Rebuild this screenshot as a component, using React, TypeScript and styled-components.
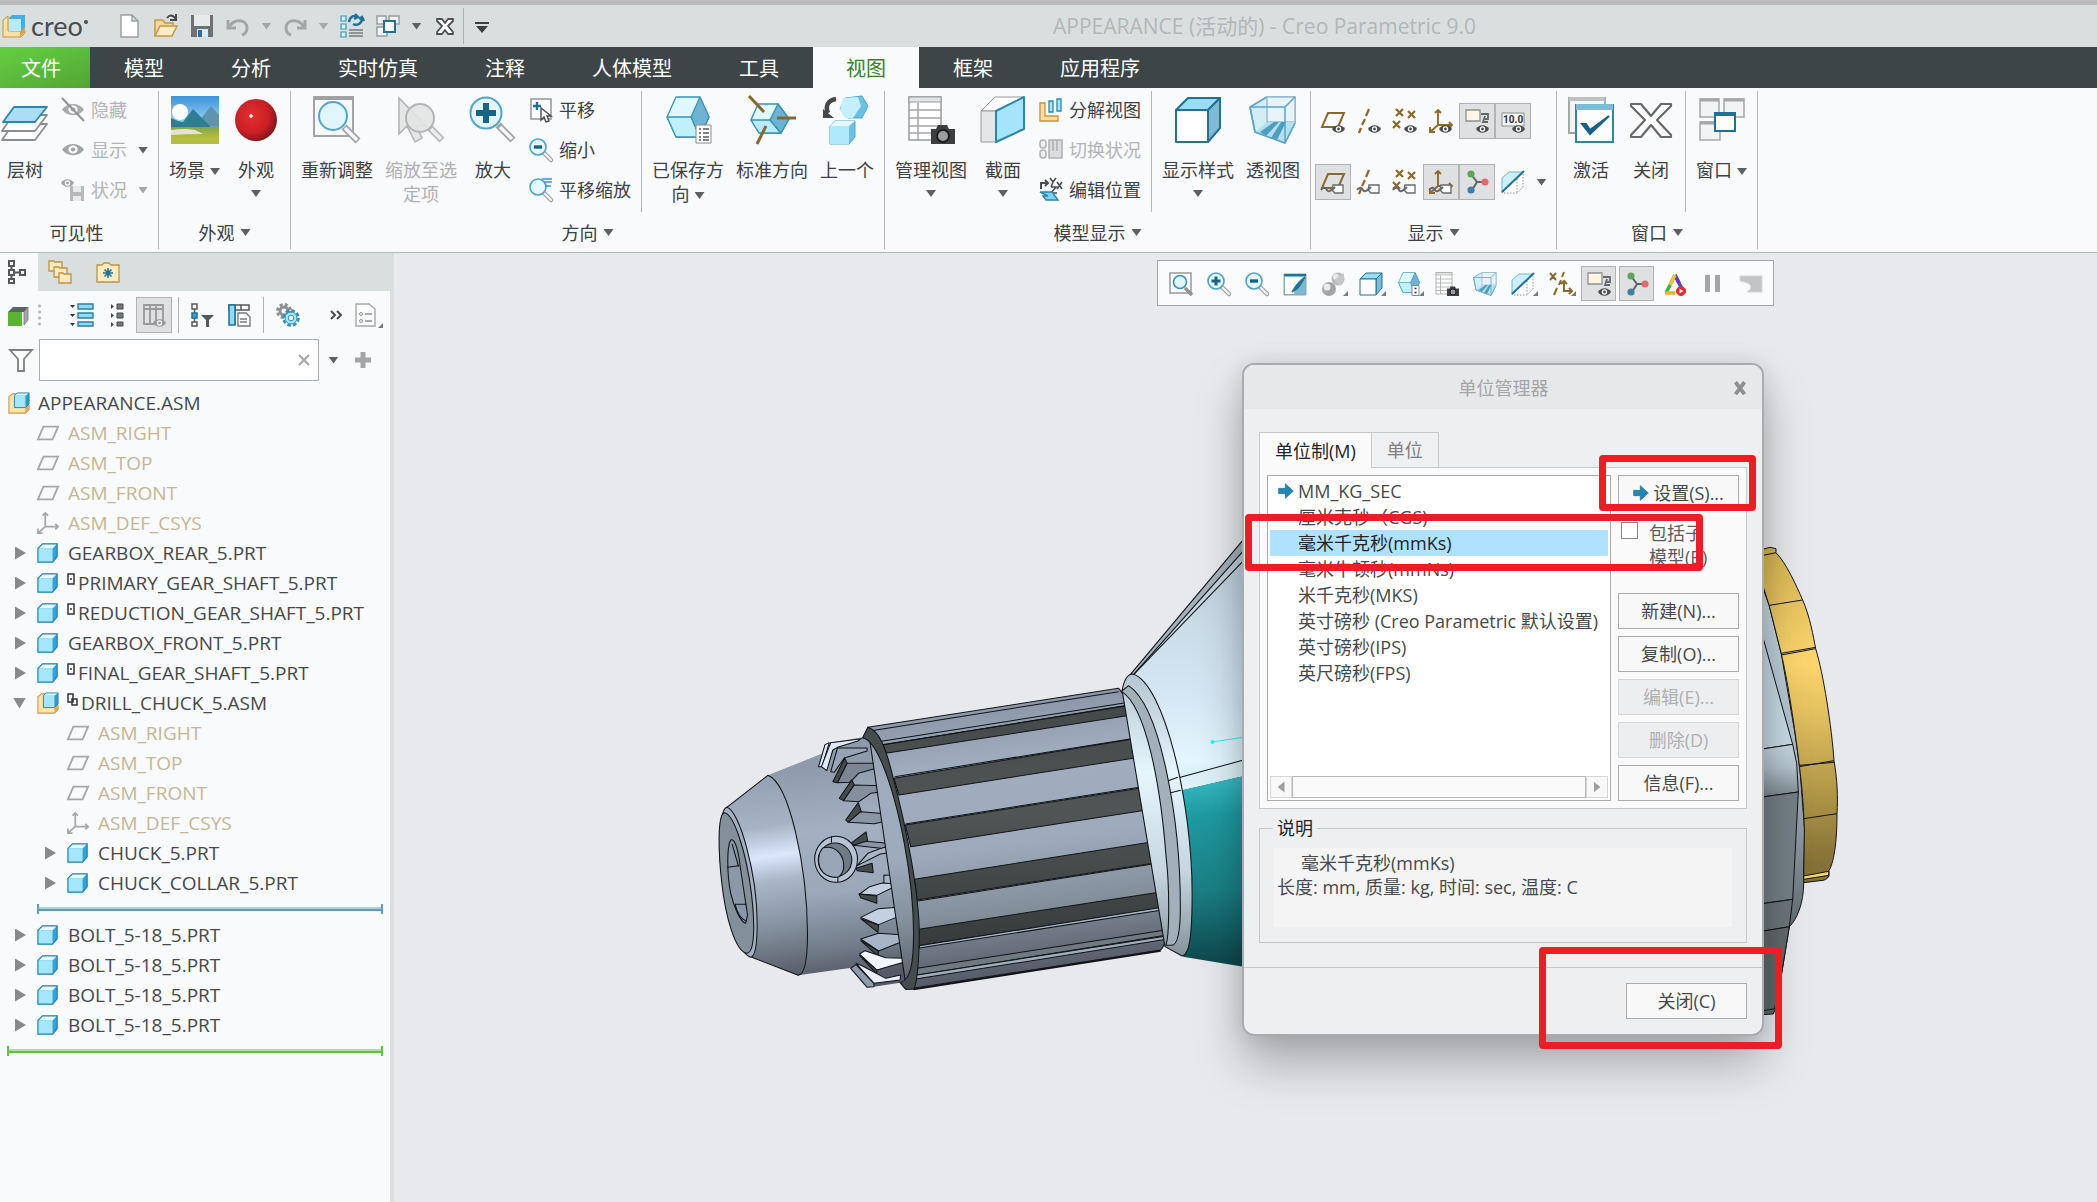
import React, { useState } from "react";
import styled, { createGlobalStyle, css } from "styled-components";

const GlobalStyle = createGlobalStyle`
  *, *::before, *::after { box-sizing: border-box; }
  html, body, #root { height: 100%; }
  body {
    margin: 0;
    overflow: hidden;
    background: #e8e9ed;
    color: #3e4143;
    font-family: "Open Sans", "Noto Sans CJK SC", sans-serif;
    font-size: 18px;
    line-height: 24px;
  }
  button, input { font: inherit; color: inherit; }
  button { border: 0; padding: 0; background: none; cursor: default; }
`;

/* ------------------------------------------------------------------ icons */

const Glyph = styled.svg<{ $size: number }>`
  display: block;
  flex: none;
  width: ${(p) => p.$size}px;
  height: ${(p) => p.$size}px;
  overflow: visible;
`;

const BLUE = "#1f7196";
const SKY = "#a5e6fb";
const BROWN = "#8a6a2c";

const Eye = ({ x = 0, y = 0, c = "#4a4d4f" }: { x?: number; y?: number; c?: string }) => (
  <g transform={`translate(${x} ${y})`}>
    <path d="M0 5C3 0 10 0 13 5 10 10 3 10 0 5Z" fill={c} />
    <circle cx="6.500" cy="5" r="2.700" fill="#fff" />
    <circle cx="6.500" cy="5" r="1.400" fill={c} />
  </g>
);

const Tag = () => (
  <g fill="#fff" stroke="#66696b" strokeWidth="1.300">
    <path d="M12 15h10v8h-8l-3-3z" />
    <path d="M0 20c3-4 5-2 6 0s3 2 8-3" fill="none" stroke="#66696b" strokeWidth="2" />
  </g>
);

const Molecule = () => (
  <g>
    <path d="M6 4l6 8-5 8M12 12h8" stroke="#5b6466" strokeWidth="2" fill="none" />
    <circle cx="6" cy="4" r="3.600" fill="#5fa558" />
    <circle cx="6" cy="20" r="3.600" fill="#3f7fa5" />
    <circle cx="20" cy="12" r="3.600" fill="#e46a68" />
  </g>
);

const Magnifier = ({ children }: { children?: React.ReactNode }) => (
  <g>
    <path d="M14 14l8 8" stroke="#9b9d9f" strokeWidth="4.500" strokeLinecap="round" />
    <path d="M15 15l7 7" stroke="#f1f2f3" strokeWidth="2.400" strokeLinecap="round" />
    <circle cx="9" cy="9" r="8" fill="#e6f7fe" stroke="#4aa3c8" strokeWidth="1.600" />
    {children}
  </g>
);

const BoxPart = () => (
  <g>
    <path d="M1 7l5-5h16v14l-5 6H1z" fill="#2ea3de" />
    <path d="M1 7l5-5h16l-5 5z" fill="#e6f9ff" />
    <path d="M1 7h16v15H1z" fill={SKY} />
    <path d="M1 7l5-5h16v14l-5 6H1z" fill="none" stroke="#2583ad" strokeWidth="1.300" />
  </g>
);

const BoxAssembly = () => (
  <g>
    <path d="M1 5l4-3h4v13h14v4l-4 4H1z" fill="#fde3ac" stroke="#c79a4c" strokeWidth="1.200" />
    <path d="M19 23l4-4v-6l-4 3z" fill="#dca957" />
    <path d="M7 4l3-3h13v12l-4 4H7z" fill="#2f9bcb" />
    <path d="M7 4l3-3h13l-4 3z" fill="#def6ff" />
    <path d="M7 4h12v13H7z" fill={SKY} />
    <path d="M7 4l3-3h13v12l-4 4H7z" fill="none" stroke="#2583ad" />
  </g>
);

const Plane = ({ c = "#a6a7a8" }: { c?: string }) => (
  <path d="M7 4h16l-6 14H1z" fill="none" stroke={c} strokeWidth="2" />
);

const Axes = ({ c = "#a6a7a8" }: { c?: string }) => (
  <g fill="none" stroke={c} strokeWidth="1.900">
    <path d="M9 16V1M6 4l3-3 3 3M9 16h14M20 13l3 3-3 3M9 16l-8 7M1 18v5h5" />
  </g>
);

const Crosses = ({ c = BROWN }: { c?: string }) => (
  <path d="M3 0l7 7M10 0L3 7M15 2l7 7M22 2l-7 7M0 12l7 7M7 12l-7 7" stroke={c} strokeWidth="2.200" fill="none" />
);

const HexCube = () => (
  <g stroke="#3a93b5" strokeWidth="1.300" strokeLinejoin="round">
    <path d="M12 1h24l9 20-9 20H12L3 21z" fill="#dff7ff" />
    <path d="M3 21h24l9 20H12z" fill="#bff0fc" />
    <path d="M27 21L36 1l9 20-9 20z" fill="#6eb2d4" />
  </g>
);

const CamTable = () => (
  <g>
    <path d="M2 1h32v43H2z" fill="#fff" stroke="#98999b" strokeWidth="1.500" />
    <path d="M2 1h32v5H2z" fill="#e3e4e5" stroke="#98999b" />
    <path d="M2 14h32M2 22h32M2 30h32M2 37h32M11 7v37" stroke="#a4a5a7" strokeWidth="1.500" />
    <path d="M24 33h5l2-4h9l2 4h6v15H24z" fill="#3c3e40" />
    <circle cx="36" cy="40" r="6" fill="#9b9da0" stroke="#1d1e20" strokeWidth="2" />
  </g>
);

const Wire = () => (
  <g stroke="#59a5c3" strokeWidth="1.500" strokeLinejoin="round">
    <path d="M1 11L18 1h28v26L36 47 6 36z" fill="#d3ecf6" />
    <path d="M18 1v25h28V1z" fill="#e6f3f8" stroke="#9bbccb" />
    <path d="M18 26L6 36l30 11 10-21z" fill="#b5dfee" stroke="none" />
    <path d="M11 36l14-10h5L17 40zM22 42l10-16h5L28 44z" fill="#4d9fc0" stroke="none" />
    <path d="M1 11h35L46 1M36 11v36M1 11l5 25 30 11 10-20" fill="none" />
  </g>
);

const SolidBox = () => (
  <g stroke={BLUE} strokeWidth="2" strokeLinejoin="round">
    <path d="M2 14L14 2h32L34 14z" fill="#9adcf3" />
    <path d="M34 14L46 2v30L34 46z" fill="#7fbcd4" />
    <path d="M2 14h32v32H2z" fill="#fff" />
  </g>
);

const SectionLine = () => (
  <g>
    <path d="M1 8l7-6h14v14l-6 7H1z" fill="#fff" />
    <path d="M1 8l7-6h14L1 23z" fill="#cdeefb" stroke="#6cb8d8" />
    <path d="M3 23h13l6-6V3M16 9v13" stroke="#8f9193" strokeDasharray="1.500 1.500" fill="none" />
    <path d="M1 22L23 1" stroke={BLUE} strokeWidth="2" />
  </g>
);

const NoteBox = () => (
  <g>
    <path d="M1 1h14v11H1z" fill="#fdf6e2" stroke="#8f9091" strokeWidth="1.300" />
    <path d="M16 5h7v6M23 10h-4M20 7l-2 6h5" stroke="#66696b" strokeWidth="1.800" fill="none" />
    <Eye x={11} y={15} />
  </g>
);

const art: Record<string, { box: number; node: React.ReactNode }> = {
  logo: { box: 24, node: (
    <g>
      <path d="M1 6l5-4v15h17v2l-4 4H1z" fill="#fde0a2" stroke="#c4953f" />
      <path d="M18 23l5-5V7l-5 4z" fill="#d9a347" />
      <path d="M7 4l3-3h13v12l-4 4H7z" fill="#45b0dd" />
      <path d="M7 5h12v12H7z" fill="#b4ebfc" />
    </g>
  ) },
  fresh: { box: 24, node: <path d="M3 1h11l6 6v16H3zM14 1v6h6" fill="#fff" stroke="#9a9c9e" strokeWidth="1.400" /> },
  open: { box: 24, node: (
    <g>
      <path d="M1 22V6h8l2 3h8v4" fill="#f6d799" stroke="#c79746" strokeWidth="1.500" />
      <path d="M1 22l5-10h17l-5 10z" fill="#fdecc4" stroke="#c79746" strokeWidth="1.500" />
      <path d="M13 4c3-4 6-3 9 1M22 0v6h-6" stroke="#45484a" strokeWidth="2" fill="none" />
    </g>
  ) },
  save: { box: 24, node: (
    <g>
      <path d="M1 1h22v22H1z" fill="#6f7274" />
      <path d="M4 1h16v11H4z" fill="#e8e9ea" />
      <path d="M7 15h11v8H7z" fill="#d9eaf4" />
      <path d="M8 16h4v7H8z" fill="#2f6d9c" />
    </g>
  ) },
  undo: { box: 24, node: <path d="M2 6v8h8M3 13C8 4 21 5 21 14c0 4-2 6-5 7" fill="none" stroke="#a2a6a7" strokeWidth="3" /> },
  redo: { box: 24, node: <path d="M22 6v8h-8M21 13C16 4 3 5 3 14c0 4 2 6 5 7" fill="none" stroke="#a2a6a7" strokeWidth="3" /> },
  regen: { box: 24, node: (
    <g>
      <path d="M1 2h5v5H1zM1 10h5v5H1zM1 18h5v5H1z" fill="#d8f3fd" stroke="#3a93b5" strokeWidth="1.200" />
      <path d="M9 16h14M9 19h14M9 22h14" stroke="#77797b" strokeWidth="1.500" />
      <path d="M9 8c1-6 5-7 8-5M14 5l4-2-3-3M22 4c0 6-5 8-9 6M19 5l3-2 2 4" stroke={BLUE} strokeWidth="2.400" fill="none" />
    </g>
  ) },
  windows: { box: 24, node: (
    <g fill="#f4f5f6" stroke="#9a9c9e" strokeWidth="1.500">
      <path d="M1 2h9v8H1zM13 2h10v8H13zM1 13h10v9H1z" />
      <path d="M8 7h11v11H8z" fill="#fff" stroke={BLUE} strokeWidth="2" />
    </g>
  ) },
  xsmall: { box: 24, node: (
    <path d="M4 5h5l3 4 3-4h5v2l-5 5 5 6v2h-5l-3-4-3 4H4v-2l5-6-5-5z" fill="#fff" stroke="#4d5052" strokeWidth="1.800" strokeLinejoin="round" />
  ) },
  more: { box: 24, node: <path d="M5 8h14v2H5zM6 12h12l-6 7z" fill="#3c4042" /> },

  layers: { box: 48, node: (
    <g stroke="#8b8d8f" strokeWidth="1.800" strokeLinejoin="round">
      <path d="M12 28h34L34 44H1z" fill="#fff" />
      <path d="M12 19h34L34 35H1z" fill="#fff" />
      <path d="M13 11h33L34 26H2z" fill="#a9def6" stroke="#2b86aa" />
    </g>
  ) },
  scene: { box: 48, node: (
    <g>
      <defs>
        <linearGradient id="sky" x1="0" y1="0" x2="0" y2="1">
          <stop offset="0" stopColor="#3b93d9" />
          <stop offset=".6" stopColor="#a5d9f5" />
        </linearGradient>
        <linearGradient id="field" x1="0" y1="0" x2="0" y2="1">
          <stop offset="0" stopColor="#7fa548" />
          <stop offset=".6" stopColor="#b3bd3f" />
        </linearGradient>
      </defs>
      <path d="M0 0h48v48H0z" fill="url(#sky)" />
      <circle cx="9" cy="16" r="8" fill="#fbfdfe" />
      <path d="M24 30l16-20 8 9v12z" fill="#5f94ae" />
      <path d="M0 22l7 3 5 1 10-13 9 9 9 9H0z" fill="#2f7c95" />
      <path d="M0 31h48v17H0z" fill="url(#field)" />
      <path d="M0 34q14-2 24 0l8 4q-16 0-32 1z" fill="#e6e2cf" />
    </g>
  ) },
  sphere: { box: 48, node: (
    <g>
      <defs>
        <radialGradient id="redball" cx=".4" cy=".4" r=".62">
          <stop offset="0" stopColor="#e23030" />
          <stop offset=".65" stopColor="#cb2026" />
          <stop offset="1" stopColor="#84161c" />
        </radialGradient>
      </defs>
      <circle cx="24" cy="24" r="21" fill="url(#redball)" />
      <circle cx="19" cy="20" r="1.800" fill="#fff" />
    </g>
  ) },
  refit: { box: 48, node: (
    <g>
      <path d="M1 1h39v39H1z" fill="#f7f8f9" stroke="#a2a3a5" strokeWidth="2" />
      <path d="M1 1h39v3H1z" fill="#9fa0a2" />
      <path d="M31 31l14 14" stroke="#a2a3a5" strokeWidth="7" />
      <path d="M32 32l12 12" stroke="#f4f5f6" strokeWidth="3.500" />
      <circle cx="20" cy="20" r="14" fill="#e0f5fd" stroke="#4fa6ca" strokeWidth="2" />
    </g>
  ) },
  zoomsel: { box: 48, node: (
    <g>
      <path d="M2 2v36l8-8 8 16 7-4-6-12h10z" fill="#e5e6e7" stroke="#b4b5b6" strokeWidth="1.600" />
      <path d="M33 32l12 12" stroke="#b9babb" strokeWidth="7" />
      <path d="M34 33l10 10" stroke="#eceded" strokeWidth="3.500" />
      <circle cx="23" cy="22" r="14" fill="#e2e4e4" fillOpacity=".9" stroke="#b2b4b4" strokeWidth="2" />
    </g>
  ) },
  zoomin: { box: 48, node: (
    <g>
      <path d="M29 29l15 15" stroke="#a2a3a5" strokeWidth="7" />
      <path d="M31 31l12 12" stroke="#f4f5f6" strokeWidth="3.500" />
      <circle cx="17" cy="17" r="15.500" fill="#e4f6fd" stroke="#4fa6ca" strokeWidth="2" />
      <path d="M17 7v20M7 17h20" stroke="#176489" strokeWidth="6" />
    </g>
  ) },
  savedview: { box: 48, node: (
    <g>
      <HexCube />
      <path d="M32 29h15v18H32z" fill="#fff" stroke="#87898b" />
      <path d="M35 33h2M39 33h6M35 37h2M39 37h6M35 41h2M39 41h6M35 44h2M39 44h6" stroke="#55585a" strokeWidth="1.500" />
    </g>
  ) },
  stdview: { box: 48, node: (
    <g stroke="#3a93b5" strokeWidth="1.400" strokeLinejoin="round">
      <path d="M10 8h20l11 15-8 14H11L3 24z" fill="#e2f8ff" />
      <path d="M3 24h19l11 13H11z" fill="#b9ecfa" />
      <path d="M30 8l11 15-8 14-11-13z" fill="#6eb2d4" />
      <path d="M1 0l15 16M29 22h19M18 30L9 48" stroke="#86692a" strokeWidth="3" />
    </g>
  ) },
  previous: { box: 48, node: (
    <g>
      <path d="M13 3C5 4 2 10 5 17" fill="none" stroke="#45484a" strokeWidth="4.500" />
      <path d="M0 13v9h11z" fill="#45484a" />
      <path d="M22 2l17-2 6 10-6 12H25l-8-9z" fill="#6cc0e2" stroke="#4fa9cb" />
      <path d="M20 2l15-1 3 9-8 12H22l-5-8z" fill="#c5effc" />
      <path d="M7 30l5-5h20v16l-6 7H7z" fill="#6cc0e2" stroke="#4fa9cb" />
      <path d="M7 30h19v18H7z" fill="#aeeafb" />
      <path d="M7 30l5-5h20l-6 5z" fill="#e6f9ff" />
    </g>
  ) },
  manage: { box: 48, node: <CamTable /> },
  section: { box: 48, node: (
    <g strokeLinejoin="round">
      <path d="M2 15L16 1h29L17 15z" fill="#fff" stroke="#97999b" />
      <path d="M2 15h15v31H2z" fill="#e5e6e7" stroke="#97999b" />
      <path d="M17 15L45 1v32L17 46z" fill="#a5e4fa" stroke="#2b86aa" strokeWidth="2" />
    </g>
  ) },
  dispstyle: { box: 48, node: <SolidBox /> },
  perspective: { box: 48, node: <Wire /> },
  activate: { box: 48, node: (
    <g>
      <path d="M2 2h36v35H2z" fill="#f3f4f5" stroke="#9d9fa1" strokeWidth="1.800" />
      <path d="M2 1h36v4H2z" fill="#bfc0c2" />
      <path d="M9 9h37v37H9z" fill="#fcfdfd" stroke="#2b86aa" strokeWidth="2" />
      <path d="M9 8h37v6H9z" fill="#7dbad3" />
      <path d="M15 28l8 10 19-18-19 14-4-6z" fill="#186285" stroke="#186285" strokeWidth="2" />
    </g>
  ) },
  close: { box: 48, node: (
    <path d="M4 8h10l10 12L34 8h10v2L30 24l14 15v2H34L24 29 14 41H4v-2l14-15L4 10z" fill="#fff" stroke="#67696a" strokeWidth="2.200" strokeLinejoin="round" />
  ) },
  window: { box: 48, node: (
    <g fill="#f2f3f4" stroke="#a4a6a8" strokeWidth="1.500">
      <path d="M2 3h19v18H2zM26 3h20v18H26zM2 26h20v18H2z" />
      <path d="M2 4h19M26 4h20M2 27h20" strokeWidth="3" />
      <path d="M17 17h20v18H17z" fill="#fff" stroke={BLUE} strokeWidth="2" />
      <path d="M17 18h20" stroke={BLUE} strokeWidth="4" />
    </g>
  ) },

  hide: { box: 24, node: (
    <g><g transform="translate(1 4) scale(1.700 1.500)"><Eye c="#a9abac" /></g><path d="M1 0l22 23" stroke="#8f9192" strokeWidth="2" /></g>
  ) },
  show: { box: 24, node: <g transform="translate(1 4) scale(1.700 1.500)"><Eye c="#a2a4a5" /></g> },
  status: { box: 24, node: (
    <g>
      <Eye x={0} y={0} c="#a2a4a5" />
      <path d="M9 8h14v15H9z" fill="#b6b8b9" />
      <path d="M12 8h8v6h-8zM12 18h8v5h-8z" fill="#e9eaea" />
    </g>
  ) },
  pan: { box: 24, node: (
    <g>
      <path d="M2 1h20v20H2z" fill="#fff" stroke="#939597" strokeWidth="1.500" />
      <path d="M8 4v8M4 8h8" stroke={BLUE} strokeWidth="2.400" />
      <path d="M12 10v12l3-3 2 5 3-1-2-5h4z" fill="#fff" stroke="#4a4c4e" strokeWidth="1.400" />
    </g>
  ) },
  zoomout: { box: 24, node: <Magnifier><path d="M5 9h8" stroke="#176489" strokeWidth="3.400" /></Magnifier> },
  zoominS: { box: 24, node: <Magnifier><path d="M4.500 9h9M9 4.500v9" stroke="#176489" strokeWidth="3" /></Magnifier> },
  panzoom: { box: 24, node: <g><Magnifier /><path d="M13 1h10M15 4h8M16 8h6" stroke="#2e9ccd" strokeWidth="1.600" /></g> },
  explode: { box: 24, node: (
    <g>
      <path d="M1 5h5v13h13v5H1z" fill="#fbdd9d" stroke="#c4953f" strokeWidth="1.300" />
      <path d="M10 3h4v11h-4zM18 1h4v12h-4z" fill={SKY} stroke="#2b86aa" strokeWidth="1.300" />
    </g>
  ) },
  toggle: { box: 24, node: (
    <g fill="#eff0f0" stroke="#b0b2b3" strokeWidth="1.600">
      <rect x="1" y="2" width="6" height="8" rx="3" />
      <rect x="1" y="12" width="6" height="8" rx="3" />
      <path d="M10 2h13v18H10zM14 2v11M18 2v11" fill="#dcddde" />
    </g>
  ) },
  editpos: { box: 24, node: (
    <g fill="none">
      <path d="M2 11V5h6M6 2l3 3-3 3" stroke="#4a4d4f" strokeWidth="2" />
      <path d="M11 0l3 4 3-4M14 4l-2 5M18 4l5 7M23 4l-5 7M12 9h5l-5 6h6" stroke="#4a4d4f" strokeWidth="1.600" />
      <path d="M1 14h12l6 8H7l-3-4h5z" fill="#7fd3f2" stroke="#2b86aa" strokeWidth="1.400" />
    </g>
  ) },

  planeEye: { box: 24, node: <g><Plane c={BROWN} /><Eye x={11} y={15} /></g> },
  axisEye: { box: 24, node: <g><path d="M12 0L9 7M8 10l-3 6M4 19l-2 5" stroke={BROWN} strokeWidth="2.200" /><Eye x={11} y={15} /></g> },
  pointEye: { box: 24, node: <g><Crosses /><Eye x={11} y={15} /></g> },
  csysEye: { box: 24, node: <g><Axes c={BROWN} /><Eye x={10} y={15} /></g> },
  note: { box: 24, node: <NoteBox /> },
  dim: { box: 24, node: (
    <g>
      <path d="M1 4h22v13H1z" fill="#f6f7f7" stroke="#8a8c8e" />
      <text x="2" y="14" fontSize="10" fontWeight="700" fill="#2f3133" fontFamily="Roboto, sans-serif">10.0</text>
      <Eye x={11} y={15} />
    </g>
  ) },
  planeTag: { box: 24, node: <g><Plane c={BROWN} /><Tag /></g> },
  axisTag: { box: 24, node: <g><path d="M12 0L9 7M8 10l-3 6M4 19l-2 5" stroke={BROWN} strokeWidth="2.200" /><Tag /></g> },
  pointTag: { box: 24, node: <g><Crosses /><Tag /></g> },
  csysTag: { box: 24, node: <g><Axes c={BROWN} /><Tag /></g> },
  molecule: { box: 24, node: <Molecule /> },
  sectionLine: { box: 24, node: <SectionLine /> },

  gRefit: { box: 24, node: (
    <g>
      <path d="M1 1h21v20H1z" fill="#fff" stroke="#98999b" strokeWidth="1.500" />
      <path d="M16 16l7 7" stroke="#8f9193" strokeWidth="3.500" />
      <circle cx="11" cy="10" r="6.500" fill="#dff4fd" stroke="#3a93b5" strokeWidth="1.600" />
    </g>
  ) },
  repaint: { box: 24, node: (
    <g>
      <path d="M1 2h22v21H1z" fill="#7db8d0" stroke="#8fa3ac" />
      <path d="M1 2h22v2H1z" fill={BLUE} />
      <path d="M2 5h20C14 8 12 14 11 22H2z" fill="#fff" />
      <path d="M9 20l4-6 9-9-7 11z" fill={BLUE} stroke={BLUE} strokeWidth="1.500" />
    </g>
  ) },
  render: { box: 24, node: (
    <g>
      <circle cx="17" cy="7" r="6.500" fill="#b9babb" />
      <circle cx="15" cy="5" r="3" fill="#e9e9ea" />
      <path d="M13 8l7 6 3-8v-5" fill="#c6c7c8" />
      <circle cx="8" cy="17" r="7" fill="#a3a4a6" />
      <circle cx="6" cy="15" r="3.500" fill="#ebebec" />
    </g>
  ) },
  gSolid: { box: 48, node: <SolidBox /> },
  gHex: { box: 48, node: <g><HexCube /><path d="M30 27h14v20H30z" fill="#fff" stroke="#87898b" strokeWidth="2" /><path d="M35 33h4M35 41h4" stroke="#333" strokeWidth="3" /></g> },
  gManage: { box: 48, node: <CamTable /> },
  gWire: { box: 48, node: <Wire /> },
  datums: { box: 24, node: (
    <g stroke={BROWN} fill="none" strokeWidth="2">
      <path d="M1 1l6 7M7 1L1 8M15 0l-2 5M12 8l-2 5M8 16l-3 7M15 9v10h8M12 12l3-3 3 3M20 16l3 3-3 3" />
    </g>
  ) },
  prism: { box: 24, node: (
    <g fill="none" strokeWidth="3.500" strokeLinejoin="round">
      <path d="M3 21L12 3" stroke="#38b54a" />
      <path d="M12 3l9 18" stroke="#2d55c8" />
      <path d="M12 3l4 8" stroke="#7a2bbd" />
      <path d="M2 21h10" stroke="#e8b32a" />
      <path d="M7 13l5-10" stroke="#e7c72f" />
      <circle cx="18" cy="19" r="4.500" fill="#e6252c" stroke="#e6252c" strokeWidth="1" />
      <path d="M16.500 16.500v5l4-2.500z" fill="#fff" />
    </g>
  ) },
  pause: { box: 24, node: <path d="M4 3h5v17H4zM14 3h5v17h-5z" fill="#a4a5a7" /> },
  stop: { box: 24, node: <path d="M1 4h22v16H8c6-4 6-9-7-11z" fill="#c3c4c6" stroke="#d6d7d8" /> },

  tree: { box: 24, node: (
    <g fill="none" stroke="#55585a" strokeWidth="2">
      <path d="M2 1h5v5H2zM2 10h5v5H2zM2 19h5v4H2zM13 10h5v5h-5zM4.500 6v4M4.500 15v4M7 12.500h6" />
    </g>
  ) },
  folders: { box: 24, node: (
    <g fill="#fdeabf" stroke="#bf9347" strokeWidth="1.300">
      <path d="M1 1h5l1 1h7v9H1z" /><path d="M6 7h5l1 1h7v9H6z" /><path d="M11 13h4l1 1h7v9H11z" />
    </g>
  ) },
  favs: { box: 24, node: (
    <g>
      <path d="M1 5h5l2-2h5l2 2h8v17H1z" fill="#fdeabf" stroke="#bf9347" strokeWidth="1.300" />
      <path d="M12 8v10M7 13h10M8.500 9.500l7 7M15.500 9.500l-7 7" stroke={BLUE} strokeWidth="1.600" />
    </g>
  ) },
  greencube: { box: 24, node: (
    <g>
      <path d="M2 9l5-5h15l-4 5z" fill="#5f6264" />
      <path d="M18 9l4-5v13l-4 5z" fill="#a5a7a8" stroke="#77797b" strokeWidth=".8" />
      <path d="M2 9h14v14H2z" fill="#59b432" />
    </g>
  ) },
  expand: { box: 24, node: (
    <g>
      <path d="M0 2h5L2.500 5zM0 11h5l-2.500 3zM0 20h5l-2.500 3z" fill="#333" />
      <path d="M8 1h15v5H8zM8 10h15v5H8zM8 19h15v4H8z" fill="#8fdcf6" stroke="#2b7fa3" strokeWidth="1.400" />
    </g>
  ) },
  collapse: { box: 24, node: (
    <g fill="#45484a">
      <path d="M5 1v5l3-2.500zM5 10v5l3-2.500zM5 19v5l3-2.500z" />
      <path d="M11 1h6v5h-6zM11 10h6v5h-6zM11 19h6v4h-6z" fill="#77797b" stroke="#45484a" />
    </g>
  ) },
  cols: { box: 24, node: (
    <g>
      <path d="M2 2h19v19H2zM2 6h19M8 2v19M14 2v19" fill="none" stroke="#98999b" strokeWidth="1.800" />
      <Eye x={11} y={15} c="#98999b" />
    </g>
  ) },
  treefilter: { box: 24, node: (
    <g>
      <path d="M1 1h5v5H1zM1 19h5v4H1zM3.500 6v13" fill="#fff" stroke="#55585a" strokeWidth="1.500" />
      <path d="M1 10h5v5H1z" fill="#3fa4cf" stroke={BLUE} strokeWidth="1.500" />
      <path d="M10 12h13l-5 5v7h-3v-7z" fill="#55585a" />
    </g>
  ) },
  treecols: { box: 24, node: (
    <g>
      <path d="M2 2h20v5H2zM8 2v5M14 2v5M8 7v14" fill="#fff" stroke="#55585a" strokeWidth="1.500" />
      <path d="M2 2h6v20H2z" fill="#8fdcf6" stroke={BLUE} strokeWidth="1.500" />
      <path d="M11 10h8l4 4v9H11z" fill="#fff" stroke="#77797b" strokeWidth="1.400" />
      <path d="M13 16h7M13 19h7" stroke="#77797b" strokeWidth="1.500" />
    </g>
  ) },
  gears: { box: 24, node: (
    <g fill="none">
      <circle cx="8" cy="8" r="6.500" stroke="#8d9092" strokeWidth="3" strokeDasharray="3 2.100" />
      <circle cx="8" cy="8" r="4" stroke="#8d9092" strokeWidth="3" />
      <circle cx="15" cy="15" r="7.500" stroke="#2f8fb7" strokeWidth="2.500" strokeDasharray="3.600 2.300" />
      <circle cx="15" cy="15" r="6" fill="#a9e4f9" stroke="#2f8fb7" />
      <circle cx="15" cy="15" r="2.800" fill="#fff" stroke="#2f8fb7" />
    </g>
  ) },
  chevrons: { box: 24, node: <path d="M6 8l4 4-4 4M12 8l4 4-4 4" fill="none" stroke="#4a4d4f" strokeWidth="2" /> },
  docset: { box: 24, node: (
    <g>
      <path d="M1 1h13l6 5v17H1z" fill="#fafbfb" stroke="#a6a8a9" strokeWidth="1.400" />
      <circle cx="6" cy="11" r="1.500" fill="none" stroke="#8e9091" /><circle cx="6" cy="18" r="1.500" fill="none" stroke="#8e9091" />
      <path d="M10 11h7M10 18h7" stroke="#8e9091" strokeWidth="1.600" />
    </g>
  ) },
  funnel: { box: 24, node: <path d="M1 2h22l-8 9v12H9V11z" fill="#fafbfb" stroke="#7d8082" strokeWidth="1.800" /> },
  clear: { box: 24, node: <path d="M7 7l10 10M17 7L7 17" stroke="#a3a5a6" strokeWidth="2" /> },
  plus: { box: 24, node: <path d="M12 4v16M4 12h16" stroke="#a2a4a5" strokeWidth="5" /> },

  part: { box: 24, node: <BoxPart /> },
  asm: { box: 24, node: <BoxAssembly /> },
  plane: { box: 24, node: <g transform="translate(0 1)"><Plane /></g> },
  csys: { box: 24, node: <Axes /> },
  xdialog: { box: 24, node: <path d="M6 4l12 16M18 4L6 20" stroke="#8c8e90" strokeWidth="5" /> },
  arrow: { box: 24, node: (
    <path d="M1 8h10V1l12 11-12 11v-7H1z" fill="#2486b0" stroke="#1b6d92" />
  ) },
};

const Icon = ({ name, size = 24 }: { name: string; size?: number }) => (
  <Glyph $size={size} viewBox={`0 0 ${art[name].box} ${art[name].box}`} aria-hidden="true">
    {art[name].node}
  </Glyph>
);

const Caret = styled.span<{ $dim?: boolean }>`
  display: inline-block;
  flex: none;
  width: 10px;
  height: 7px;
  background: ${(p) => (p.$dim ? "#a5a8a9" : "#5d6062")};
  clip-path: polygon(0 0, 100% 0, 50% 100%);
`;

/* ------------------------------------------------------------ application */

const Frame = styled.div`
  display: flex;
  flex-direction: column;
  height: 100vh;
  border-top: 5px solid #b9babc;
`;

const TitleBar = styled.header`
  display: flex;
  align-items: center;
  height: 42px;
  flex: none;
  background: #d9dfde;
`;

const Brand = styled.div`
  display: flex;
  align-items: center;
  gap: 5px;
  width: 112px;
  padding-left: 2px;
  color: #484c4e;
  font-family: Lato, sans-serif;
  font-size: 27px;
  line-height: 32px;
`;

const Dot = styled.span`
  width: 4px;
  height: 4px;
  margin-bottom: 8px;
  margin-left: -4px;
  border-radius: 50%;
  background: #484c4e;
`;

const QuickButton = styled.button<{ $narrow?: boolean }>`
  display: flex;
  align-items: center;
  justify-content: center;
  width: ${(p) => (p.$narrow ? 21 : 36)}px;
  height: 36px;
`;

const QuickDivider = styled.span`
  width: 1px;
  height: 36px;
  background: #a9b1b1;
`;

const WindowTitle = styled.h1`
  flex: 1;
  margin: 0;
  padding-right: 68px;
  color: #b3b7b7;
  font-size: 21px;
  font-weight: 400;
  line-height: 28px;
  text-align: center;
`;

const TabBar = styled.nav`
  display: flex;
  flex: none;
  gap: 1px;
  height: 41px;
  background: #3d4547;
`;

const RibbonTab = styled.button<{ $kind?: "file" | "active" }>`
  padding: 2px 33px 0;
  color: #fff;
  font-size: 20px;
  line-height: 28px;
  ${(p) => p.$kind === "file" && css`
    padding: 2px 29px 0 21px;
    background: linear-gradient(160deg, #64cf42, #53a534);
  `}
  ${(p) => p.$kind === "active" && css`
    background: #f8fafc;
    color: #3f8127;
  `}
`;

const Ribbon = styled.section`
  display: flex;
  flex: none;
  height: 165px;
  padding-top: 3px;
  border-bottom: 1px solid #afbcbd;
  background: #f8fafc;
`;

const Group = styled.div`
  display: flex;
  flex-direction: column;
  height: 158px;
  border-right: 1px solid #b4b7b9;
`;

const GroupBody = styled.div`
  display: flex;
  height: 121px;
`;

const GroupPart = styled.div<{ $flush?: boolean }>`
  display: flex;
  padding: 0 4px 0 ${(p) => (p.$flush ? 0 : 4)}px;
  & + & { border-left: 1px solid #b4b7b9; }
`;

const GroupName = styled.button<{ $flush?: boolean }>`
  display: flex;
  flex: 1;
  align-items: center;
  justify-content: center;
  gap: 6px;
  padding: 4px ${(p) => (p.$flush ? 5 : 0)}px 0 0;
`;

const BigButton = styled.button<{ $edge?: boolean }>`
  display: flex;
  flex-direction: column;
  align-items: center;
  justify-content: flex-start;
  gap: 14px;
  padding: 5px 6px 0 ${(p) => (p.$edge ? 1 : 6)}px;
  &:disabled { color: #aeb0b1; }
`;

const BigLabel = styled.span`
  display: block;
  white-space: pre;
  text-align: center;
  line-height: 24px;
  ${Caret} { margin: 0 0 2px 5px; }
`;

const UnderCaret = styled.span`
  display: block;
  ${Caret} { margin: 0 0 4px; }
`;

const Stack = styled.div`
  display: flex;
  flex-direction: column;
  gap: 16px;
  padding-top: 7px;
`;

const SmallButton = styled.button`
  display: flex;
  align-items: center;
  gap: 6px;
  height: 24px;
  padding: 0 6px;
  white-space: nowrap;
  ${Caret} { margin-left: 5px; }
  &:disabled { color: #b2b4b5; }
`;

const ToggleGrid = styled.div`
  display: grid;
  grid-template-columns: repeat(6, 36px) 21px;
  grid-auto-rows: 36px;
  row-gap: 25px;
  align-items: center;
  padding-top: 12px;
`;

const ToggleButton = styled.button<{ $on?: boolean; $size?: number }>`
  position: relative;
  display: flex;
  align-items: center;
  justify-content: center;
  width: ${(p) => p.$size ?? 36}px;
  height: ${(p) => p.$size ?? 36}px;
  border: 1px solid ${(p) => (p.$on ? "#b1b2b4" : "transparent")};
  background: ${(p) => (p.$on ? "#dfe0e2" : "transparent")};
`;

const Corner = styled.span`
  position: absolute;
  right: 1px;
  bottom: 4px;
  width: 5px;
  height: 5px;
  background: #77797b;
  clip-path: polygon(100% 0, 100% 100%, 0 100%);
`;

/* ------------------------------------------------------------- side panel */

const Workspace = styled.main`
  display: flex;
  flex: 1;
  min-height: 0;
`;

const SidePanel = styled.aside`
  display: flex;
  flex-direction: column;
  flex: none;
  width: 394px;
  background: #f8fafc;
`;

const PanelTabs = styled.div`
  display: flex;
  flex: none;
  height: 38px;
  background: #d9dfde;
`;

const PanelTab = styled.button<{ $on?: boolean }>`
  display: flex;
  align-items: center;
  width: ${(p) => (p.$on ? 38 : 48)}px;
  padding-left: ${(p) => (p.$on ? 7 : 10)}px;
  background: ${(p) => (p.$on ? "#f8fafc" : "transparent")};
`;

const PanelBody = styled.div`
  flex: 1;
  border-right: 4px solid #dbdfe0;
`;

const PanelTools = styled.div`
  display: flex;
  align-items: center;
  height: 48px;
  padding: 0 5px 0 6px;
`;

const ToolGap = styled.span`
  flex: 1;
`;

const Grip = styled.span`
  width: 3px;
  height: 24px;
  margin: 0 23px 0 8px;
  background: radial-gradient(circle, #b5b8b9 1px, transparent 2px) 0 0 / 3px 6px;
`;

const ToolDivider = styled.span`
  width: 1px;
  height: 36px;
  margin: 0 6px;
  background: #b0b3b5;
`;

const SearchRow = styled.div`
  display: flex;
  align-items: center;
  padding-left: 9px;
  gap: 6px;
`;

const SearchBox = styled.label`
  display: flex;
  align-items: center;
  width: 280px;
  height: 42px;
  padding-right: 2px;
  border: 1px solid #a5b1b3;
  background: #fff;
  input {
    flex: 1;
    min-width: 0;
    height: 38px;
    padding: 0 8px;
    border: 0;
    outline: 0;
    background: transparent;
  }
`;

const SearchActions = styled.div`
  display: flex;
  gap: 8px;
  margin-left: -2px;
`;

const Tree = styled.ul`
  margin: 7px 0 0;
  padding: 0;
  list-style: none;
`;

const TreeRow = styled.li<{ $depth: number; $dim?: boolean }>`
  display: flex;
  align-items: center;
  height: 30px;
  padding-left: ${(p) => p.$depth * 30 - 22}px;
  color: ${(p) => (p.$dim ? "#c3b798" : "#46494b")};
  font-size: 19px;
  white-space: nowrap;
`;

const Twisty = styled.button<{ $open?: boolean }>`
  width: 29px;
  height: 24px;
  padding-left: ${(p) => (p.$open ? 5 : 7)}px;
  &::before {
    content: "";
    display: block;
    width: ${(p) => (p.$open ? 13 : 11)}px;
    height: ${(p) => (p.$open ? 11 : 13)}px;
    background: #88898b;
    clip-path: ${(p) => (p.$open ? "polygon(0 0, 100% 0, 50% 100%)" : "polygon(0 0, 100% 50%, 0 100%)")};
  }
  &:disabled::before { background: none; }
`;

const TreeIcon = styled.span`
  width: 30px;
`;

const TreeText = styled.span<{ $nested?: boolean }>`
  padding-left: ${(p) => (p.$nested ? 1 : 0)}px;
`;

const Mark = styled.svg`
  align-self: flex-start;
  flex: none;
  margin: 5px 1px 0 0;
`;

const InsertLine = styled.li<{ $color: string; $soft: string; $indent: number }>`
  height: 22px;
  margin: 0 7px 0 ${(p) => p.$indent}px;
  padding-top: 6px;
  &::before {
    content: "";
    display: block;
    height: 10px;
    border: solid ${(p) => p.$color};
    border-width: 0 2px;
    background: linear-gradient(transparent 3px, ${(p) => p.$soft} 3px 5px, ${(p) => p.$color} 5px 7px, transparent 7px);
  }
`;

/* ---------------------------------------------------------------- viewport */

const Viewport = styled.section`
  position: relative;
  flex: 1;
  min-width: 0;
  overflow: hidden;
  background: #e8e9ed;
`;

const Model = styled.svg`
  position: absolute;
  top: 0;
  left: 0;
  width: 1703px;
  height: 949px;
`;

const GraphicsBar = styled.div`
  position: absolute;
  top: 7px;
  left: 763px;
  display: flex;
  gap: 3px;
  padding: 5px 5px 4px;
  border: 1px solid #a1a3a5;
  background: #fafbfc;
`;

const Dialog = styled.section`
  position: absolute;
  top: 110px;
  left: 848px;
  display: flex;
  flex-direction: column;
  width: 522px;
  border: 2px solid #a9abad;
  border-radius: 12px;
  background: #eeeff1;
  box-shadow: 0 28px 48px rgba(0, 0, 0, 0.27), 0 0 24px rgba(0, 0, 0, 0.1);
`;

const DialogHead = styled.header`
  display: grid;
  grid-template-columns: 1fr auto 1fr;
  align-items: center;
  height: 44px;
  padding: 2px 7px 0 8px;
  border-radius: 10px 10px 0 0;
  background: #e6e8e9;
  color: #a3a5a6;
`;

const DialogTitle = styled.h2`
  grid-column: 2;
  margin: 0;
  font-size: 18px;
  font-weight: 400;
`;

const DialogClose = styled.button`
  justify-self: end;
  padding: 6px;
`;

const DialogBody = styled.div`
  padding: 23px 15px 24px;
`;

const DialogTabs = styled.div`
  display: flex;
`;

const DialogTab = styled.button<{ $on?: boolean }>`
  height: ${(p) => (p.$on ? 36 : 35)}px;
  padding: 0 15px;
  border: 1px solid #c6c8ca;
  border-bottom: 0;
  margin-bottom: ${(p) => (p.$on ? -1 : 0)}px;
  background: ${(p) => (p.$on ? "#fafafa" : "#eff0f2")};
  color: ${(p) => (p.$on ? "#222527" : "#7d7f81")};
  z-index: ${(p) => (p.$on ? 1 : 0)};
  & + & { border-left: 0; }
`;

const TabPage = styled.div`
  display: flex;
  gap: 7px;
  height: 342px;
  padding: 7px;
  border: 1px solid #c6c8ca;
  background: #fafafa;
`;

const ListBox = styled.div`
  display: flex;
  flex: 1;
  flex-direction: column;
  padding: 2px;
  border: 1px solid #a7a9ab;
  background: #fff;
`;

const Options = styled.ul`
  flex: 1;
  margin: 0;
  padding: 0;
  list-style: none;
`;

const Option = styled.li<{ $on?: boolean }>`
  display: flex;
  align-items: center;
  gap: 4px;
  height: 26px;
  padding-left: 8px;
  background: ${(p) => (p.$on ? "#aee2fe" : "transparent")};
  color: ${(p) => (p.$on ? "#222527" : "#46494b")};
  white-space: nowrap;
`;

const OptionMark = styled.span`
  width: 16px;
`;

const ScrollTrack = styled.div`
  display: flex;
  height: 22px;
  background: #f4f4f5;
`;

const ScrollEnd = styled.button<{ $right?: boolean }>`
  display: flex;
  align-items: center;
  justify-content: center;
  width: 22px;
  border: 1px solid #d5d6d8;
  background: #f8f8f9;
  &::before {
    content: "";
    width: 7px;
    height: 11px;
    background: #9c9ea0;
    clip-path: ${(p) => (p.$right ? "polygon(0 0, 100% 50%, 0 100%)" : "polygon(100% 0, 0 50%, 100% 100%)")};
  }
`;

const ScrollThumb = styled.div`
  flex: 1;
  border: 1px solid #b8babc;
  background: #fafafa;
`;

const Actions = styled.div`
  display: flex;
  flex-direction: column;
  gap: 7px;
  width: 121px;
`;

const PushButton = styled.button`
  display: flex;
  align-items: center;
  justify-content: center;
  gap: 4px;
  width: 121px;
  height: 36px;
  flex: none;
  border: 1px solid #a9abad;
  background: #f8f8f8;
  color: #46494b;
  &:disabled {
    border-color: #d3d5d7;
    background: #edeeef;
    color: #aeb0b1;
  }
`;

const CheckRow = styled.label`
  display: flex;
  flex: 1;
  gap: 11px;
  padding: 3px 0 0 3px;
  color: #5a5d5f;
  input {
    appearance: none;
    flex: none;
    width: 17px;
    height: 17px;
    margin: 1px 0 0;
    border: 1px solid #85878a;
    background: #fff;
  }
`;

const CheckText = styled.span`
  white-space: pre;
`;

const Description = styled.fieldset`
  height: 127px;
  margin: 7px 0 0;
  padding: 8px 14px 14px;
  border: 1px solid #c6c8ca;
  legend {
    margin-left: -1px;
    padding: 0 4px;
    color: #222527;
  }
`;

const DescriptionText = styled.p`
  height: 79px;
  margin: 0;
  padding: 3px;
  background: #f4f4f4;
  color: #46494b;
  white-space: pre-wrap;
`;

const Indent = styled.span`
  padding-left: 24px;
`;

const DialogFoot = styled.footer`
  display: flex;
  justify-content: flex-end;
  padding: 15px;
  border-top: 1px solid #c6c8ca;
`;

const Highlight = styled.div<{ $x: number; $y: number; $w: number; $h: number }>`
  position: absolute;
  left: ${(p) => p.$x}px;
  top: ${(p) => p.$y}px;
  width: ${(p) => p.$w}px;
  height: ${(p) => p.$h}px;
  border: 7px solid #ee1c25;
  border-radius: 4px;
  pointer-events: none;
`;

/* ------------------------------------------------------------------- data */

type BigDef = { icon: string; label: string; caret?: "side" | "under"; off?: boolean; edge?: boolean };
const Big = ({ icon, label, caret, off, edge }: BigDef) => (
  <BigButton disabled={off} $edge={edge}>
    <Icon name={icon} size={48} />
    <BigLabel>
      {label}
      {caret === "side" && <Caret />}
      {caret === "under" && <UnderCaret><Caret /></UnderCaret>}
    </BigLabel>
  </BigButton>
);

const Small = ({ icon, label, caret, off }: { icon: string; label: string; caret?: boolean; off?: boolean }) => (
  <SmallButton disabled={off}>
    <Icon name={icon} />
    {label}
    {caret && <Caret $dim={icon === "status"} />}
  </SmallButton>
);

const displayToggles: [string, boolean][] = [
  ["planeEye", false], ["axisEye", false], ["pointEye", false], ["csysEye", false], ["note", true], ["dim", true],
];
const tagToggles: [string, boolean][] = [
  ["planeTag", true], ["axisTag", false], ["pointTag", false], ["csysTag", true], ["molecule", true], ["sectionLine", false],
];

const graphicsTools: [string, boolean, boolean][] = [
  ["gRefit", false, false], ["zoominS", false, false], ["zoomout", false, false], ["repaint", false, false],
  ["render", false, true], ["gSolid", false, true], ["gHex", false, true], ["gManage", false, false],
  ["gWire", false, false], ["sectionLine", false, true], ["datums", false, true], ["note", true, false],
  ["molecule", true, false], ["prism", false, false], ["pause", false, false], ["stop", false, false],
];

type TreeItem = { t: string; d: number; i: string; open?: boolean; leaf?: boolean; mark?: 1 | 2 };
const datum = (t: string, d: number): TreeItem => ({ t, d, i: t.includes("CSYS") ? "csys" : "plane", leaf: true });
const datums = (d: number) => ["ASM_RIGHT", "ASM_TOP", "ASM_FRONT", "ASM_DEF_CSYS"].map((t) => datum(t, d));
const upper: TreeItem[] = [
  ...datums(1),
  { t: "GEARBOX_REAR_5.PRT", d: 1, i: "part" },
  { t: "PRIMARY_GEAR_SHAFT_5.PRT", d: 1, i: "part", mark: 1 },
  { t: "REDUCTION_GEAR_SHAFT_5.PRT", d: 1, i: "part", mark: 1 },
  { t: "GEARBOX_FRONT_5.PRT", d: 1, i: "part" },
  { t: "FINAL_GEAR_SHAFT_5.PRT", d: 1, i: "part", mark: 1 },
  { t: "DRILL_CHUCK_5.ASM", d: 1, i: "asm", open: true, mark: 2 },
  ...datums(2),
  { t: "CHUCK_5.PRT", d: 2, i: "part" },
  { t: "CHUCK_COLLAR_5.PRT", d: 2, i: "part" },
];
const bolts: TreeItem[] = [1, 2, 3, 4].map(() => ({ t: "BOLT_5-18_5.PRT", d: 1, i: "part" }));

const TreeNode = ({ n }: { n: TreeItem }) => (
  <TreeRow $depth={n.d} $dim={n.leaf}>
    <Twisty $open={n.open} disabled={n.leaf} aria-label={n.leaf ? undefined : n.t} />
    <TreeIcon><Icon name={n.i} size={22} /></TreeIcon>
    {n.mark && (
      <Mark width={n.mark === 1 ? 9 : 12} height="13" viewBox={n.mark === 1 ? "0 0 9 13" : "0 0 12 13"} fill="none" stroke="#333" strokeWidth="1.500" aria-hidden="true">
        {n.mark === 1 ? <path d="M1 1h6v10H1zM3 6h2" /> : <path d="M1 1h5v8H1zM5 6h5v6H5z" />}
      </Mark>
    )}
    <TreeText $nested>{n.t}</TreeText>
  </TreeRow>
);

const unitSystems = [
  "MM_KG_SEC", "厘米克秒（CGS)", "毫米千克秒(mmKs)", "毫米牛顿秒(mmNs)", "米千克秒(MKS)",
  "英寸磅秒 (Creo Parametric 默认设置)", "英寸磅秒(IPS)", "英尺磅秒(FPS)",
];

/* -------------------------------------------------------------- 3D model */

const flutes = [
  "505,675 1205,556 1222,583 520,700",
  "543,775 1242,652 1258,707 557,825",
  "575,915 1275,797 1287,864 590,980",
  "600,1078 1300,960 1308,1023 608,1140",
  "613,1228 1312,1112 1312,1160 610,1277",
];
const teeth: [string, string][] = [
  ["#dfe8f6", "332,740 350,674 362,668 342,740"],
  ["#dfe8f6", "355,752 372,690 385,682 440,664 452,656 366,668 340,740"],
  ["#97a4b5", "366,755 385,684 468,684 468,693 404,714 376,757"],
  ["#434b4b", "372,785 405,714 412,730 385,788"],
  ["#7c8695", "385,788 412,730 490,730 488,746 444,760 428,778 418,787"],
  ["#434b4b", "390,835 425,780 432,795 402,842"],
  ["#858f9e", "402,842 432,795 508,797 512,815 478,820 445,845"],
  ["#434b4b", "408,900 443,848 452,876 415,907"],
  ["#8a95a5", "415,907 450,875 528,882 533,900 488,911"],
  ["#434b4b", "425,968 465,936 470,966 430,976"],
  ["#8a95a5", "430,976 465,964 548,972 550,995 505,985"],
  ["#a9b7c9", "440,1037 505,1002 548,995 550,972 503,986 470,1000"],
  ["#434b4b", "437,1045 482,1030 485,1058 440,1052"],
  ["#a9b7c9", "515,1065 562,1068 562,1092 515,1090"],
  ["#c3d0e2", "447,1122 475,1100 510,1089 560,1092 495,1126"],
  ["#434b4b", "445,1122 495,1128 495,1150 450,1133"],
  ["#c3d0e2", "450,1192 500,1166 570,1160 570,1183 500,1214"],
  ["#434b4b", "450,1196 500,1215 498,1237"],
  ["#a9b4c6", "450,1257 500,1240 572,1245 572,1262 500,1293"],
  ["#434b4b", "450,1262 500,1293 498,1308"],
  ["#f2f7ff", "447,1302 462,1292 520,1313 570,1315 570,1327 495,1350"],
  ["#434b4b", "447,1306 495,1350 495,1362"],
  ["#e8effb", "437,1330 455,1338 520,1375 562,1365 560,1380 487,1390"],
  ["#8f9bac", "422,1345 437,1334 487,1390 487,1400 468,1402"],
];

const stops = (list: [number, string][]) => list.map(([o, c]) => <stop key={o} offset={o} stopColor={c} />);

const DrillModel = () => (
  <Model viewBox="394 253 1703 949" role="img" aria-label="APPEARANCE.ASM">
    <defs>
      <linearGradient id="cone" gradientUnits="userSpaceOnUse" x1="150" y1="770" x2="240" y2="1370">
        {stops([[0, "#93a0b3"], [0.25, "#a5b3c5"], [0.4, "#dbe7fb"], [0.52, "#a9b7c9"], [0.75, "#8591a0"], [1, "#565c66"]])}
      </linearGradient>
      <linearGradient id="barrel" gradientUnits="userSpaceOnUse" x1="400" y1="730" x2="480" y2="1360">
        {stops([[0, "#8e9bad"], [0.3, "#a2b0c2"], [0.6, "#9aa8ba"], [0.85, "#747e8c"], [1, "#555b66"]])}
      </linearGradient>
      <linearGradient id="collar" gradientUnits="userSpaceOnUse" x1="850" y1="560" x2="960" y2="1360">
        {stops([[0, "#8d99aa"], [0.2, "#a0adbe"], [0.5, "#9dabbd"], [0.75, "#838f9b"], [1, "#545a66"]])}
      </linearGradient>
      <linearGradient id="flute" gradientUnits="userSpaceOnUse" x1="0" y1="560" x2="0" y2="1260">
        {stops([[0, "#434a49"], [0.45, "#4f5655"], [1, "#383c3d"]])}
      </linearGradient>
      <linearGradient id="shell" gradientUnits="userSpaceOnUse" x1="0" y1="60" x2="0" y2="800">
        {stops([[0, "#b9cad7"], [0.35, "#cbdce9"], [0.65, "#d6e8f5"], [0.9, "#e3f7fe"], [1, "#d3e6ef"]])}
      </linearGradient>
      <linearGradient id="rim" gradientUnits="userSpaceOnUse" x1="0" y1="460" x2="0" y2="1310">
        {stops([[0, "#b4c5d0"], [0.35, "#e5f6fd"], [0.7, "#c5d6e0"], [1, "#85929b"]])}
      </linearGradient>
      <linearGradient id="teal" gradientUnits="userSpaceOnUse" x1="0" y1="770" x2="0" y2="1340">
        {stops([[0, "#38bcc4"], [0.2, "#1f9ba2"], [0.6, "#1b7f85"], [1, "#0e454a"]])}
      </linearGradient>
      <linearGradient id="gold" gradientUnits="userSpaceOnUse" x1="0" y1="50" x2="0" y2="1050">
        {stops([[0, "#d6b552"], [0.35, "#fcd66d"], [0.5, "#e3c05f"], [0.75, "#ad9446"], [0.95, "#857137"]])}
      </linearGradient>
      <linearGradient id="band" gradientUnits="userSpaceOnUse" x1="0" y1="650" x2="0" y2="800">
        {stops([[0, "#c3d5df"], [0.4, "#b4c4cf"], [1, "#7c878e"]])}
      </linearGradient>
      <linearGradient id="back" gradientUnits="userSpaceOnUse" x1="0" y1="250" x2="0" y2="1200">
        {stops([[0, "#c4d8e3"], [0.45, "#abbbc6"], [0.7, "#8b98a3"], [1, "#616a70"]])}
      </linearGradient>
    </defs>

    <g transform="translate(700 520) scale(.357143 .333333)" stroke="#111417" strokeWidth="3" strokeLinejoin="round">
      <path d="M190 766L455 652 600 1000 600 1320 560 1388 425 1343 275 1366z" fill="url(#barrel)" stroke="none" />
      <path d="M75 862L190 766C250 790 300 1040 301 1240 301 1330 290 1365 275 1366L145 1312z" fill="url(#cone)" />
      <path d="M75 862C110 870 160 1060 160 1210 160 1270 155 1310 142 1312 110 1300 75 1200 62 1080 50 980 54 870 75 862z" fill="#a3b1c3" />
      <path d="M68 878C48 885 52 1000 60 1080 72 1200 100 1292 130 1300 153 1300 155 1220 144 1120 130 1000 95 880 68 878z" fill="#83909a" />
      <path d="M86 960C98 955 107 990 112 1035L133 1185 128 1210C112 1205 95 1160 86 1120 75 1060 75 980 86 960z" fill="#8b98a8" />
      <path d="M76 1042l33-5M98 1153l32 0M108 1040l-18-68M98 1153q10 40 30 50" fill="none" />
      <ellipse cx="381" cy="1018" rx="60" ry="69" fill="#b7c4d6" />
      <ellipse cx="378" cy="1020" rx="47" ry="51" fill="#6f7988" />
      <path d="M345 983C385 975 405 1010 402 1045q-3 18-14 26C350 1075 330 1050 332 1015q2-20 13-32z" fill="#98a6b8" />
      <path d="M368 950v18M386 1070v16" />

      <path d="M362 668L455 652C540 670 605 980 600 1260 598 1350 588 1392 560 1388L487 1400C470 1330 500 1240 500 1160 500 1000 440 780 372 700z" fill="url(#barrel)" stroke="none" />
      {teeth.map(([fill, points]) => <polygon key={points} points={points} fill={fill} />)}

      <path d="M470 622L1172 505 1205 548C1270 640 1313 900 1313 1150 1313 1230 1305 1275 1290 1290L578 1408z" fill="url(#collar)" />
      {flutes.map((points) => <polygon key={points} points={points} fill="url(#flute)" />)}
      <path d="M480 632L1172 515M508 664L1205 546M510 675L1205 554M545 770l698-120M575 912l700-118M610 1143l698-118" fill="none" />
      <path d="M614 1277l698-118v8L614 1284z" fill="#a9b9ca" />
      <path d="M608 1345l700-116v16L604 1366z" fill="#6f7980" />
      <path d="M604 1366l702-118v10L604 1377z" fill="#9fadbd" />
      <path d="M455 654L470 622C500 630 520 680 540 770 580 930 615 1130 614 1250 613 1340 605 1400 598 1408L576 1408 560 1388C590 1380 598 1330 598 1240 598 1080 560 860 510 730 490 680 470 655 455 654z" fill="#454d4c" />
      <path d="M598 1408l692-116" strokeWidth="6" />

      <path d="M1212 462L1522 58V722L1335 775C1325 640 1280 500 1212 462z" fill="url(#shell)" stroke="none" />
      <path d="M1200 470L1522 58V92L1212 466z" fill="#a5b1bb" />
      <path d="M1212 466L1522 122" fill="none" />
      <path d="M1335 775L1522 720V770L1340 815z" fill="#dff1f8" />
      <path d="M1343 812L1522 768V1340L1352 1310C1375 1290 1378 1200 1378 1110 1378 1000 1362 880 1343 812z" fill="url(#teal)" stroke="none" />
      <path d="M1182 512Q1190 462 1212 462C1300 490 1378 850 1378 1120 1378 1250 1370 1305 1350 1308L1302 1280z" fill="url(#rim)" />
      <path d="M1180 514L1200 497C1290 560 1345 900 1345 1160 1345 1240 1335 1276 1320 1276H1304C1315 1250 1315 1100 1305 1010 1290 800 1250 560 1180 514z" fill="#a2b1b9" />
      <path d="M1311 782L1338 772M1318 818l28-7" fill="none" />
      <path d="M1435 666l87-14" stroke="#2ff3f3" />
      <circle cx="1435" cy="666" r="6" fill="#2ff3f3" stroke="none" />
    </g>

    <g transform="translate(1680 530) scale(.333333)" stroke="#111417" strokeWidth="3" strokeLinejoin="round">
      <path d="M240 150L268 228 304 372 345 610 360 720 374 900 371 1060C371 1120 350 1170 328 1190L305 1330 285 1440 280 1452 240 1454z" fill="url(#back)" />
      <path d="M240 290L338 643 240 658z" fill="#c7dae4" />
      <path d="M240 658L338 643 350 700 355 786 240 802z" fill="url(#band)" />
      <path d="M240 802L355 786 338 1108 240 1122z" fill="#747f86" />
      <path d="M240 1122L338 1108 328 1190 240 1205z" fill="#6b757b" />
      <path d="M240 1205L328 1190 305 1330 284 1436 240 1444z" fill="#61696d" />
      <path d="M240 60L270 52 288 56V68C320 100 350 170 368 210 390 260 400 320 407 356 430 430 455 590 462 692 472 750 474 800 471 852 471 920 465 990 447 1022V1038Q440 1052 420 1052L371 1058 373 900C370 800 362 740 356 690 340 560 320 440 304 372L268 228 240 140z" fill="url(#gold)" />
      <path d="M371 1038l75-14v12l-75 12z" fill="#fcd66d" />
      <path d="M240 78L288 68M268 226L368 210M304 375L407 356M304 370L407 352M358 710L462 692M358 706L462 697M371 866L471 851" fill="none" />
    </g>
  </Model>
);

/* --------------------------------------------------------------------- app */

export default function App() {
  const [selected, setSelected] = useState(2);
  const [withChildren, setWithChildren] = useState(false);
  return (
    <Frame>
      <GlobalStyle />
      <TitleBar>
        <Brand><Icon name="logo" />creo<Dot /></Brand>
        <QuickButton aria-label="新建"><Icon name="fresh" /></QuickButton>
        <QuickButton aria-label="打开"><Icon name="open" /></QuickButton>
        <QuickButton aria-label="保存"><Icon name="save" /></QuickButton>
        <QuickButton aria-label="撤消"><Icon name="undo" /></QuickButton>
        <QuickButton $narrow aria-label="撤消列表"><Caret $dim /></QuickButton>
        <QuickButton aria-label="重做"><Icon name="redo" /></QuickButton>
        <QuickButton $narrow aria-label="重做列表"><Caret $dim /></QuickButton>
        <QuickButton aria-label="重新生成"><Icon name="regen" /></QuickButton>
        <QuickButton aria-label="窗口"><Icon name="windows" /></QuickButton>
        <QuickButton $narrow aria-label="窗口列表"><Caret /></QuickButton>
        <QuickButton aria-label="关闭"><Icon name="xsmall" /></QuickButton>
        <QuickDivider />
        <QuickButton aria-label="自定义"><Icon name="more" /></QuickButton>
        <WindowTitle>APPEARANCE (活动的) - Creo Parametric 9.0</WindowTitle>
      </TitleBar>

      <TabBar>
        <RibbonTab $kind="file">文件</RibbonTab>
        {["模型", "分析", "实时仿真", "注释", "人体模型", "工具", "视图", "框架", "应用程序"].map((t) => (
          <RibbonTab key={t} $kind={t === "视图" ? "active" : undefined}>{t}</RibbonTab>
        ))}
      </TabBar>

      <Ribbon>
        <Group>
          <GroupBody>
            <GroupPart $flush>
              <Big icon="layers" label="层树" edge />
              <Stack>
                <Small icon="hide" label="隐藏" off />
                <Small icon="show" label="显示" off caret />
                <Small icon="status" label="状况" off caret />
              </Stack>
            </GroupPart>
          </GroupBody>
          <GroupName $flush>可见性</GroupName>
        </Group>
        <Group>
          <GroupBody>
            <GroupPart>
              <Big icon="scene" label="场景" caret="side" />
              <Big icon="sphere" label="外观" caret="under" />
            </GroupPart>
          </GroupBody>
          <GroupName>外观<Caret /></GroupName>
        </Group>
        <Group>
          <GroupBody>
            <GroupPart>
              <Big icon="refit" label="重新调整" />
              <Big icon="zoomsel" label={"缩放至选\n定项"} off />
              <Big icon="zoomin" label="放大" />
              <Stack>
                <Small icon="pan" label="平移" />
                <Small icon="zoomout" label="缩小" />
                <Small icon="panzoom" label="平移缩放" />
              </Stack>
            </GroupPart>
            <GroupPart>
              <Big icon="savedview" label={"已保存方\n向"} caret="side" />
              <Big icon="stdview" label="标准方向" />
              <Big icon="previous" label="上一个" />
            </GroupPart>
          </GroupBody>
          <GroupName>方向<Caret /></GroupName>
        </Group>
        <Group>
          <GroupBody>
            <GroupPart>
              <Big icon="manage" label="管理视图" caret="under" />
              <Big icon="section" label="截面" caret="under" />
              <Stack>
                <Small icon="explode" label="分解视图" />
                <Small icon="toggle" label="切换状况" off />
                <Small icon="editpos" label="编辑位置" />
              </Stack>
            </GroupPart>
            <GroupPart>
              <Big icon="dispstyle" label="显示样式" caret="under" />
              <Big icon="perspective" label="透视图" />
            </GroupPart>
          </GroupBody>
          <GroupName>模型显示<Caret /></GroupName>
        </Group>
        <Group>
          <GroupBody>
            <GroupPart>
              <ToggleGrid>
                {displayToggles.map(([n, on]) => <ToggleButton key={n} $on={on} aria-label={n}><Icon name={n} /></ToggleButton>)}
                <span />
                {tagToggles.map(([n, on]) => <ToggleButton key={n} $on={on} aria-label={n}><Icon name={n} /></ToggleButton>)}
                <QuickButton $narrow aria-label="更多"><Caret /></QuickButton>
              </ToggleGrid>
            </GroupPart>
          </GroupBody>
          <GroupName>显示<Caret /></GroupName>
        </Group>
        <Group>
          <GroupBody>
            <GroupPart>
              <Big icon="activate" label="激活" />
              <Big icon="close" label="关闭" />
            </GroupPart>
            <GroupPart>
              <Big icon="window" label="窗口" caret="side" />
            </GroupPart>
          </GroupBody>
          <GroupName>窗口<Caret /></GroupName>
        </Group>
      </Ribbon>

      <Workspace>
        <SidePanel>
          <PanelTabs>
            <PanelTab $on aria-label="模型树"><Icon name="tree" /></PanelTab>
            <PanelTab aria-label="文件夹浏览器"><Icon name="folders" /></PanelTab>
            <PanelTab aria-label="收藏夹"><Icon name="favs" /></PanelTab>
          </PanelTabs>
          <PanelBody>
            <PanelTools>
              <Icon name="greencube" />
              <Grip />
              <ToggleButton aria-label="展开"><Icon name="expand" /></ToggleButton>
              <ToggleButton aria-label="折叠"><Icon name="collapse" /></ToggleButton>
              <ToggleButton $on aria-label="列"><Icon name="cols" /></ToggleButton>
              <ToolDivider />
              <ToggleButton aria-label="树过滤器"><Icon name="treefilter" /></ToggleButton>
              <ToggleButton aria-label="树列"><Icon name="treecols" /></ToggleButton>
              <ToolDivider />
              <ToggleButton aria-label="设置"><Icon name="gears" /></ToggleButton>
              <ToolGap />
              <Icon name="chevrons" />
              <ToggleButton aria-label="选项"><Icon name="docset" /><Corner /></ToggleButton>
            </PanelTools>
            <SearchRow>
              <Icon name="funnel" />
              <SearchBox>
                <input type="text" aria-label="搜索" />
                <Icon name="clear" />
              </SearchBox>
              <SearchActions>
                <QuickButton $narrow aria-label="搜索选项"><Caret /></QuickButton>
                <QuickButton $narrow aria-label="添加"><Icon name="plus" /></QuickButton>
              </SearchActions>
            </SearchRow>
            <Tree>
              <TreeRow $depth={1}><TreeIcon><Icon name="asm" size={22} /></TreeIcon><TreeText>APPEARANCE.ASM</TreeText></TreeRow>
              {upper.map((n) => <TreeNode key={n.t + n.d} n={n} />)}
              <InsertLine $color="#5c9db8" $soft="#b3cedb" $indent={37} />
              {bolts.map((n, i) => <TreeNode key={i} n={n} />)}
              <InsertLine $color="#5cc63c" $soft="#afe09f" $indent={7} />
            </Tree>
          </PanelBody>
        </SidePanel>

        <Viewport>
          <DrillModel />
          <GraphicsBar>
            {graphicsTools.map(([n, on, more]) => (
              <ToggleButton key={n} $size={35} $on={on} aria-label={n}>
                <Icon name={n} />
                {more && <Corner />}
              </ToggleButton>
            ))}
          </GraphicsBar>

          <Dialog role="dialog" aria-label="单位管理器">
            <DialogHead>
              <DialogTitle>单位管理器</DialogTitle>
              <DialogClose aria-label="关闭"><Icon name="xdialog" size={18} /></DialogClose>
            </DialogHead>
            <DialogBody>
              <DialogTabs>
                <DialogTab $on>单位制(M)</DialogTab>
                <DialogTab>单位</DialogTab>
              </DialogTabs>
              <TabPage>
                <ListBox>
                  <Options role="listbox" aria-label="单位制">
                    {unitSystems.map((u, i) => (
                      <Option key={u} role="option" aria-selected={i === selected} $on={i === selected} onClick={() => setSelected(i)}>
                        <OptionMark>{i === 0 && <Icon name="arrow" size={16} />}</OptionMark>
                        {u}
                      </Option>
                    ))}
                  </Options>
                  <ScrollTrack>
                    <ScrollEnd aria-label="向左滚动" />
                    <ScrollThumb />
                    <ScrollEnd $right aria-label="向右滚动" />
                  </ScrollTrack>
                </ListBox>
                <Actions>
                  <PushButton><Icon name="arrow" size={16} />设置(S)...</PushButton>
                  <CheckRow>
                    <input type="checkbox" checked={withChildren} onChange={(e) => setWithChildren(e.target.checked)} />
                    <CheckText>{"包括子\n模型(B)"}</CheckText>
                  </CheckRow>
                  <PushButton>新建(N)...</PushButton>
                  <PushButton>复制(O)...</PushButton>
                  <PushButton disabled>编辑(E)...</PushButton>
                  <PushButton disabled>删除(D)</PushButton>
                  <PushButton>信息(F)...</PushButton>
                </Actions>
              </TabPage>
              <Description>
                <legend>说明</legend>
                <DescriptionText>
                  <Indent>毫米千克秒(mmKs)</Indent>
                  {"\n长度: mm, 质量: kg, 时间: sec, 温度: C"}
                </DescriptionText>
              </Description>
            </DialogBody>
            <DialogFoot>
              <PushButton>关闭(C)</PushButton>
            </DialogFoot>
          </Dialog>

          <Highlight $x={1205} $y={202} $w={157} $h={56} />
          <Highlight $x={851} $y={261} $w={458} $h={57} />
          <Highlight $x={1145} $y={694} $w={243} $h={102} />
        </Viewport>
      </Workspace>
    </Frame>
  );
}
